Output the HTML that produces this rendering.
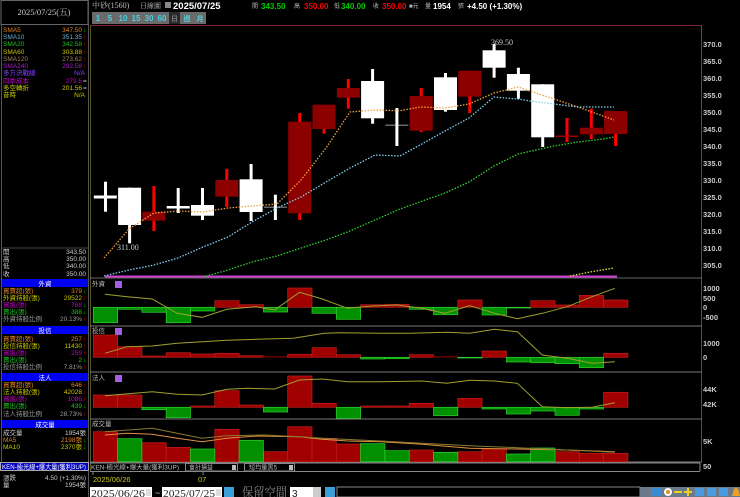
<!DOCTYPE html>
<html><head><meta charset="utf-8"><style>
html,body{margin:0;padding:0;background:#000;width:740px;height:497px;overflow:hidden}
svg{display:block}
text{font-family:"Liberation Sans","Noto Sans CJK TC",sans-serif}
.s{font-family:"Liberation Serif","Noto Serif CJK SC",serif;font-size:6.5px}
</style></head><body>
<svg width="740" height="497" viewBox="0 0 740 497" xmlns="http://www.w3.org/2000/svg">
<rect width="740" height="497" fill="#000"/>
<rect x="1" y="0.5" width="87" height="24" fill="none" stroke="#666"/>
<line x1="88.5" y1="0" x2="88.5" y2="497" stroke="#555"/>
<line x1="1.5" y1="25" x2="1.5" y2="462" stroke="#555"/>
<text x="44" y="15" class="s" fill="#ccc" text-anchor="middle" style="font-size:8.5px">2025/07/25(五)</text>
<g class="s">
<text x="3" y="32" fill="#e08020">SMA5</text><text x="82" y="32" fill="#e08020" text-anchor="end">347.50</text><text x="83" y="32" fill="#0c0">↓</text>
<text x="3" y="39" fill="#60b0d8">SMA10</text><text x="82" y="39" fill="#60b0d8" text-anchor="end">351.35</text><text x="83" y="39" fill="#f00">↑</text>
<text x="3" y="46" fill="#20c020">SMA20</text><text x="82" y="46" fill="#20c020" text-anchor="end">342.58</text><text x="83" y="46" fill="#f00">↑</text>
<text x="3" y="54" fill="#c8c800">SMA60</text><text x="82" y="54" fill="#c8c800" text-anchor="end">303.88</text><text x="83" y="54" fill="#f00">↑</text>
<text x="3" y="61" fill="#a08060">SMA120</text><text x="82" y="61" fill="#a08060" text-anchor="end">273.62</text><text x="83" y="61" fill="#f00">↑</text>
<text x="3" y="68" fill="#a020c0">SMA240</text><text x="82" y="68" fill="#a020c0" text-anchor="end">292.58</text><text x="83" y="68" fill="#f00">↑</text>
<text x="3" y="75" fill="#8040ff">多方決戰線</text><text x="85" y="75" fill="#8040ff" text-anchor="end">N/A</text>
<text x="3" y="83" fill="#c000c0">四季成本</text><text x="82" y="83" fill="#c000c0" text-anchor="end">279.5</text><text x="83" y="83" fill="#ccc">=</text>
<text x="3" y="90" fill="#c8c800">多空轉折</text><text x="82" y="90" fill="#c8c800" text-anchor="end">201.56</text><text x="83" y="90" fill="#ccc">=</text>
<text x="3" y="97" fill="#c8c800">昔時</text><text x="85" y="97" fill="#c8c800" text-anchor="end">N/A</text>
<line x1="1" y1="248" x2="88" y2="248" stroke="#444"/>
<text x="3" y="254" fill="#ccc">開</text><text x="86" y="254" fill="#ccc" text-anchor="end">343.50</text>
<text x="3" y="261" fill="#ccc">高</text><text x="86" y="261" fill="#ccc" text-anchor="end">350.00</text>
<text x="3" y="268" fill="#ccc">低</text><text x="86" y="268" fill="#ccc" text-anchor="end">340.00</text>
<text x="3" y="276" fill="#ccc">收</text><text x="86" y="276" fill="#ccc" text-anchor="end">350.00</text>
</g>
<g class="s">
<rect x="2" y="279" width="86" height="8" fill="#0000f0"/><text x="45" y="286" fill="#fff" text-anchor="middle">外資</text>
<text x="3" y="293" fill="#e08020">買賣超(張)</text><text x="82" y="293" fill="#e08020" text-anchor="end">379</text><text x="83" y="293" fill="#0c0">↓</text>
<text x="3" y="300" fill="#c8c800">外資持股(張)</text><text x="82" y="300" fill="#c8c800" text-anchor="end">29522</text><text x="83" y="300" fill="#f00">↑</text>
<text x="3" y="307" fill="#c000c0">買進(張)</text><text x="82" y="307" fill="#c000c0" text-anchor="end">768</text><text x="83" y="307" fill="#0c0">↓</text>
<text x="3" y="314" fill="#20c020">賣出(張)</text><text x="82" y="314" fill="#20c020" text-anchor="end">388</text><text x="83" y="314" fill="#0c0">↓</text>
<text x="3" y="321" fill="#999">外資持股比例</text><text x="82" y="321" fill="#999" text-anchor="end">20.13%</text><text x="83" y="321" fill="#f00">↑</text>
<rect x="2" y="326" width="86" height="8" fill="#0000f0"/><text x="45" y="333" fill="#fff" text-anchor="middle">投信</text>
<text x="3" y="341" fill="#e08020">買賣超(張)</text><text x="82" y="341" fill="#e08020" text-anchor="end">257</text><text x="83" y="341" fill="#f00">↑</text>
<text x="3" y="348" fill="#c8c800">投信持股(張)</text><text x="82" y="348" fill="#c8c800" text-anchor="end">11430</text><text x="83" y="348" fill="#f00">↑</text>
<text x="3" y="355" fill="#c000c0">買進(張)</text><text x="82" y="355" fill="#c000c0" text-anchor="end">259</text><text x="83" y="355" fill="#f00">↑</text>
<text x="3" y="362" fill="#20c020">賣出(張)</text><text x="82" y="362" fill="#20c020" text-anchor="end">2</text><text x="83" y="362" fill="#0c0">↓</text>
<text x="3" y="369" fill="#999">投信持股比例</text><text x="82" y="369" fill="#999" text-anchor="end">7.81%</text><text x="83" y="369" fill="#f00">↑</text>
<rect x="2" y="373" width="86" height="8" fill="#0000f0"/><text x="45" y="380" fill="#fff" text-anchor="middle">法人</text>
<text x="3" y="387" fill="#e08020">買賣超(張)</text><text x="82" y="387" fill="#e08020" text-anchor="end">646</text><text x="83" y="387" fill="#f00">↑</text>
<text x="3" y="394" fill="#c8c800">法人持股(張)</text><text x="82" y="394" fill="#c8c800" text-anchor="end">42028</text><text x="83" y="394" fill="#f00">↑</text>
<text x="3" y="401" fill="#c000c0">買進(張)</text><text x="82" y="401" fill="#c000c0" text-anchor="end">1086</text><text x="83" y="401" fill="#f00">↑</text>
<text x="3" y="408" fill="#20c020">賣出(張)</text><text x="82" y="408" fill="#20c020" text-anchor="end">439</text><text x="83" y="408" fill="#0c0">↓</text>
<text x="3" y="416" fill="#999">法人持股比例</text><text x="82" y="416" fill="#999" text-anchor="end">28.73%</text><text x="83" y="416" fill="#f00">↑</text>
<rect x="2" y="420" width="86" height="8" fill="#0000f0"/><text x="45" y="427" fill="#fff" text-anchor="middle">成交量</text>
<text x="3" y="435" fill="#ccc">成交量</text><text x="86" y="435" fill="#ccc" text-anchor="end">1954張</text>
<text x="3" y="442" fill="#e08020">MA5</text><text x="82" y="442" fill="#e08020" text-anchor="end">2198張</text><text x="83" y="442" fill="#0c0">↓</text>
<text x="3" y="449" fill="#c8c800">MA10</text><text x="82" y="449" fill="#c8c800" text-anchor="end">2370張</text><text x="83" y="449" fill="#0c0">↓</text>
<rect x="0.5" y="462.5" width="88" height="8" fill="#0000c0" stroke="#aaa"/><text x="2" y="469" fill="#fff" textLength="84" lengthAdjust="spacingAndGlyphs">KEN-極光線+爆大量(獲利3UP)</text>
<text x="3" y="480" fill="#ccc">漲跌</text><text x="86" y="480" fill="#ccc" text-anchor="end">4.50 (+1.30%)</text>
<text x="3" y="487" fill="#ccc">量</text><text x="86" y="487" fill="#ccc" text-anchor="end">1954張</text>
</g>
<g style="font-size:8px">
<text x="92" y="8" class="s" fill="#bbb" style="font-size:8px">中砂(1560)</text>
<text x="140" y="8" class="s" fill="#bbb" style="font-size:7px">日線圖</text>
<rect x="165" y="2" width="6" height="6" fill="#888"/>
<text x="173" y="9" fill="#fff" font-weight="bold" style="font-size:9.5px">2025/07/25</text>
<text x="252" y="8" fill="#bbb" style="font-size:6px">開</text>
<text x="261" y="9" fill="#0c0" font-weight="bold">343.50</text>
<text x="294" y="8" fill="#bbb" style="font-size:6px">高</text>
<text x="304" y="9" fill="#f00" font-weight="bold">350.00</text>
<text x="334" y="8" fill="#bbb" style="font-size:6px">低</text>
<text x="341" y="9" fill="#0c0" font-weight="bold">340.00</text>
<text x="373" y="8" fill="#bbb" style="font-size:6px">收</text>
<text x="382" y="9" fill="#f00" font-weight="bold">350.00</text>
<text x="409" y="8" fill="#bbb" style="font-size:6px">■元</text>
<text x="425" y="8" fill="#bbb" style="font-size:6px">量</text>
<text x="433" y="9" fill="#fff" font-weight="bold">1954</text>
<text x="458" y="8" fill="#bbb" style="font-size:6px">張</text>
<text x="467" y="9" fill="#fff" font-weight="bold">+4.50 (+1.30%)</text>
</g>
<g style="font-size:8px" font-weight="bold">
<rect x="92" y="12" width="114" height="12" fill="#6a6a6a"/>
<rect x="169" y="12" width="11" height="12" fill="#2a2a2a"/>
<g fill="#4ad0e0" text-anchor="middle">
<text x="98" y="21">1</text><text x="110" y="21">5</text><text x="123" y="21">10</text><text x="136" y="21">15</text><text x="149" y="21">30</text><text x="162" y="21">60</text>
</g>
<g class="s" text-anchor="middle" style="font-size:7px"><text x="174.5" y="21" fill="#777">日</text><text x="187" y="21" fill="#4ad0e0">週</text><text x="200" y="21" fill="#4ad0e0">月</text></g>
</g>
<line x1="90" y1="25.5" x2="702" y2="25.5" stroke="#7a2040"/>
<line x1="90.5" y1="25" x2="90.5" y2="472" stroke="#552"/>
<line x1="701.5" y1="25" x2="701.5" y2="462" stroke="#552"/>
<line x1="90" y1="278" x2="702" y2="278" stroke="#666"/>
<line x1="90" y1="326" x2="702" y2="326" stroke="#777"/>
<line x1="90" y1="372" x2="702" y2="372" stroke="#777"/>
<line x1="90" y1="419" x2="702" y2="419" stroke="#777"/>
<line x1="90" y1="462" x2="702" y2="462" stroke="#777"/>
<g fill="#ccc" style="font-size:7.5px" font-weight="bold">
<text x="703" y="47">370.0</text><text x="703" y="64">365.0</text><text x="703" y="81">360.0</text><text x="703" y="98">355.0</text><text x="703" y="115">350.0</text><text x="703" y="132">345.0</text><text x="703" y="149">340.0</text><text x="703" y="166">335.0</text><text x="703" y="183">330.0</text><text x="703" y="200">325.0</text><text x="703" y="217">320.0</text><text x="703" y="234">315.0</text><text x="703" y="251">310.0</text><text x="703" y="268">305.0</text>
<text x="703" y="291">1000</text><text x="703" y="301">500</text><text x="703" y="310">0</text><text x="703" y="320">-500</text>
<text x="703" y="346">1000</text><text x="703" y="360">0</text>
<text x="703" y="392">44K</text><text x="703" y="407">42K</text>
<text x="703" y="444">5K</text><text x="703" y="469">50</text>
</g>
<line x1="105" y1="276.5" x2="617" y2="276.5" stroke="#d040d0" stroke-width="2"/>
<g>
<rect x="104" y="181.7" width="3" height="30" fill="#fff"/><rect x="93.8" y="195.5" width="23" height="3" fill="#fff"/>
<rect x="128.1" y="187.7" width="3" height="55.6" fill="#fff"/><rect x="118.1" y="187.7" width="23" height="37.3" fill="#fff"/>
<rect x="152.4" y="186" width="3" height="45" fill="#f00"/><rect x="142.4" y="211.7" width="23" height="9" fill="#8c0000"/>
<rect x="176.7" y="188" width="3" height="25" fill="#fff"/><rect x="166.7" y="206" width="23" height="2.5" fill="#fff"/>
<rect x="201" y="188" width="3" height="32" fill="#fff"/><rect x="191" y="205" width="23" height="10.7" fill="#fff"/>
<rect x="225.3" y="169" width="3" height="38" fill="#f00"/><rect x="215.3" y="180" width="23" height="16.7" fill="#8c0000"/>
<rect x="249.6" y="164" width="3" height="57" fill="#fff"/><rect x="239.6" y="179.3" width="23" height="32.7" fill="#fff"/>
<rect x="263.9" y="206.5" width="23" height="1.5" fill="#666"/><rect x="273.9" y="194.7" width="3" height="25.3" fill="#fff"/>
<rect x="298.2" y="113" width="3" height="107" fill="#f00"/><rect x="288.2" y="121.7" width="23" height="91.6" fill="#8c0000"/>
<rect x="322.5" y="104.7" width="3" height="29" fill="#f00"/><rect x="312.5" y="104.7" width="23" height="24.3" fill="#8c0000"/>
<rect x="346.8" y="79" width="3" height="29.7" fill="#f00"/><rect x="336.8" y="88" width="23" height="9.7" fill="#8c0000"/>
<rect x="371.1" y="69" width="3" height="54.7" fill="#fff"/><rect x="361.1" y="81" width="23" height="37.3" fill="#fff"/>
<rect x="385.4" y="124.5" width="23" height="1.5" fill="#666"/><rect x="395.4" y="108" width="3" height="38" fill="#fff"/>
<rect x="419.7" y="88" width="3" height="44" fill="#f00"/><rect x="409.7" y="96" width="23" height="34.7" fill="#8c0000"/>
<rect x="444" y="73" width="3" height="38.7" fill="#fff"/><rect x="434" y="77.3" width="23" height="32.7" fill="#fff"/>
<rect x="468.3" y="70.7" width="3" height="42.3" fill="#f00"/><rect x="458.3" y="70.7" width="23" height="26" fill="#8c0000"/>
<rect x="492.6" y="44" width="3" height="33.7" fill="#fff"/><rect x="482.6" y="50.3" width="23" height="17.4" fill="#fff"/>
<rect x="516.9" y="67.7" width="3" height="31" fill="#fff"/><rect x="506.9" y="74" width="23" height="16.7" fill="#fff"/>
<rect x="541.2" y="84.3" width="3" height="62.7" fill="#fff"/><rect x="531.2" y="84.3" width="23" height="53" fill="#fff"/>
<rect x="565.5" y="118" width="3" height="24" fill="#f00"/><rect x="555.5" y="135.5" width="23" height="1.5" fill="#a00000"/>
<rect x="589.8" y="108.7" width="3" height="30.3" fill="#f00"/><rect x="579.8" y="127.7" width="23" height="6.6" fill="#8c0000"/>
<rect x="614.1" y="111" width="3" height="35" fill="#f00"/><rect x="604.1" y="111" width="23" height="23" fill="#8c0000"/>
</g>
<text x="491" y="45" fill="#ccc" class="s" style="font-size:8px">369.50</text>
<text x="117" y="250" fill="#ccc" class="s" style="font-size:8px">311.00</text>
<g fill="none" stroke-width="1.3" stroke-dasharray="1.5,1.5">
<polyline stroke="#f0a040" points="104,258 129,229 154,213 178,211 203,212 228,208 252,206 277,204 301,180 326,148 350,112 375,110 400,110.7 420,107 445,108 469,104 494,93 518,87 530,91 554,99 578,107 603,116 614,120"/>
<polyline stroke="#80d0f0" points="104,276 129,270 154,265 178,258 203,247 228,237 252,222 277,208 301,197 326,182 350,168 375,155 400,156 420,145 445,131 469,118 494,97 518,99 530,101 554,104 578,107 603,107 614,107"/>
<polyline stroke="#30d030" points="203,277 228,270 252,262 277,256 301,248 326,240 350,231 375,220 400,209 445,193 469,182 494,166 518,154 554,146 578,142 603,139 614,137"/>
<polyline stroke="#e0e030" points="570,276 590,272 614,268"/>
</g>
<rect x="115" y="281" width="7" height="7" fill="#a060e0"/><rect x="115" y="328" width="7" height="7" fill="#a060e0"/><rect x="115" y="375" width="7" height="7" fill="#a060e0"/>
<g class="s" fill="#bbb"><text x="92" y="286">外資</text><text x="92" y="333">投信</text><text x="92" y="380">法人</text><text x="92" y="426">成交量</text></g>
<g stroke-width="0.7">
<g fill="#009000" stroke="#30d030">
<rect x="93.3" y="307.3" width="24.3" height="15.4"/><rect x="117.6" y="307.3" width="24.3" height="2"/><rect x="141.9" y="307.3" width="24.3" height="5"/><rect x="166.2" y="307.3" width="24.3" height="15.4"/><rect x="190.5" y="307.3" width="24.3" height="3.7"/><rect x="263.4" y="307.3" width="24.3" height="4.7"/><rect x="312" y="307.3" width="24.3" height="6"/><rect x="336.3" y="307.3" width="24.3" height="12"/><rect x="409.2" y="307.3" width="24.3" height="2"/><rect x="433.5" y="307.3" width="24.3" height="7.4"/><rect x="482.1" y="307.3" width="24.3" height="7.7"/><rect x="506.4" y="307.3" width="24.3" height="0.7"/>
</g>
<g fill="#a00000" stroke="#c02020">
<rect x="214.8" y="300.7" width="24.3" height="6.6"/><rect x="239.1" y="304.7" width="24.3" height="2.6"/><rect x="287.7" y="288" width="24.3" height="19.3"/><rect x="360.6" y="304.7" width="24.3" height="2.6"/><rect x="384.9" y="304.3" width="24.3" height="3"/><rect x="457.8" y="300" width="24.3" height="7.3"/><rect x="530.7" y="300.7" width="24.3" height="6.6"/><rect x="555" y="305" width="24.3" height="2.3"/><rect x="579.3" y="295.3" width="24.3" height="12"/><rect x="603.6" y="300" width="24.3" height="7.3"/>
</g>
</g>
<polyline fill="none" stroke="#a0a030" stroke-width="1" points="104.9,294.3 127.3,296.7 152.2,299 177.1,313.3 202,317.3 226.9,309.3 256,306.7 274.6,310 299.5,292.3 322.4,299 347.3,308.3 372.2,306 397,305 422,308.3 444.8,313.3 469.7,305.7 494.6,313.3 517.4,318.7 542.3,313.3 567.2,306.7 592.1,296.7 614.9,288.3"/>
<g stroke-width="0.7">
<g fill="#a00000" stroke="#c02020">
<rect x="93.3" y="335" width="24.3" height="22.3"/><rect x="117.6" y="346.7" width="24.3" height="10.6"/><rect x="141.9" y="356" width="24.3" height="1.3"/><rect x="166.2" y="352.7" width="24.3" height="4.6"/><rect x="190.5" y="354" width="24.3" height="3.3"/><rect x="214.8" y="353.3" width="24.3" height="4"/><rect x="239.1" y="355.7" width="24.3" height="1.6"/><rect x="263.4" y="356.3" width="24.3" height="1" fill="#600000" stroke="#600000"/><rect x="287.7" y="354.3" width="24.3" height="3"/><rect x="312" y="347.7" width="24.3" height="9.6"/><rect x="336.3" y="354.7" width="24.3" height="2.6"/><rect x="409.2" y="354.7" width="24.3" height="2.6"/><rect x="433.5" y="356.3" width="24.3" height="1" fill="#600000" stroke="#600000"/><rect x="482.1" y="351" width="24.3" height="6.3"/><rect x="603.6" y="353.3" width="24.3" height="4"/>
</g>
<g fill="#009000" stroke="#30d030">
<rect x="360.6" y="357.3" width="24.3" height="1.7"/><rect x="384.9" y="357.3" width="24.3" height="1.4"/><rect x="457.8" y="357.3" width="24.3" height="0.7"/><rect x="506.4" y="357.3" width="24.3" height="4.7"/><rect x="530.7" y="357.3" width="24.3" height="5.4"/><rect x="555" y="357.3" width="24.3" height="6.4"/><rect x="579.3" y="357.3" width="24.3" height="10.4"/>
</g>
</g>
<polyline fill="none" stroke="#a0a030" stroke-width="1" points="104.9,353.3 127.3,346.7 152.2,346 177.1,343.3 202,341.7 226.9,340.3 256,339.3 293.3,338.3 324.4,333.3 339,332.7 380.5,333.3 409.5,333.3 446.8,332.3 469.7,333.3 494.6,329.3 517.4,331.7 542.3,355 567.2,358.3 592.1,363.3 614.9,361.7"/>
<g stroke-width="0.7">
<g fill="#a00000" stroke="#c02020">
<rect x="93.3" y="395" width="24.3" height="12.3"/><rect x="117.6" y="395" width="24.3" height="12.3"/><rect x="190.5" y="406" width="24.3" height="1.3"/><rect x="214.8" y="390.7" width="24.3" height="16.6"/><rect x="239.1" y="405" width="24.3" height="2.3"/><rect x="287.7" y="376" width="24.3" height="31.3"/><rect x="312" y="403.3" width="24.3" height="4"/><rect x="360.6" y="406" width="24.3" height="1.3"/><rect x="384.9" y="406" width="24.3" height="1.3"/><rect x="409.2" y="403.3" width="24.3" height="4"/><rect x="457.8" y="398.3" width="24.3" height="9"/><rect x="603.6" y="392.3" width="24.3" height="15"/>
</g>
<g fill="#009000" stroke="#30d030">
<rect x="141.9" y="407.3" width="24.3" height="2.4"/><rect x="166.2" y="407.3" width="24.3" height="10.4"/><rect x="263.4" y="407.3" width="24.3" height="4.7"/><rect x="336.3" y="407.3" width="24.3" height="11"/><rect x="433.5" y="407.3" width="24.3" height="8.4"/><rect x="482.1" y="407.3" width="24.3" height="1.7"/><rect x="506.4" y="407.3" width="24.3" height="6.7"/><rect x="530.7" y="407.3" width="24.3" height="3.7"/><rect x="555" y="407.3" width="24.3" height="8"/><rect x="579.3" y="407.3" width="24.3" height="1.7"/>
</g>
</g>
<polyline fill="none" stroke="#a0a030" stroke-width="1" points="104.9,395.7 152.2,391.7 177.1,394.3 202,395 226.9,389.3 247.7,388.3 274.6,389 299.5,380 322.4,379 347.3,381.7 380.5,381.7 422,381 446.8,383.3 469.7,380.3 494.6,381 517.4,383.3 542.3,406.7 567.2,407.7 592.1,407.3 614.9,402.7"/>
<g stroke-width="0.7">
<g fill="#a00000" stroke="#c02020">
<rect x="93.3" y="431.7" width="24.3" height="30"/><rect x="141.9" y="442.7" width="24.3" height="19"/><rect x="166.2" y="447.3" width="24.3" height="14.4"/><rect x="214.8" y="429.3" width="24.3" height="32.4"/><rect x="263.4" y="451.7" width="24.3" height="10"/><rect x="287.7" y="426.7" width="24.3" height="35"/><rect x="312" y="438.3" width="24.3" height="23.4"/><rect x="336.3" y="444" width="24.3" height="17.7"/><rect x="409.2" y="450" width="24.3" height="11.7"/><rect x="457.8" y="451.7" width="24.3" height="10"/><rect x="482.1" y="449" width="24.3" height="12.7"/><rect x="555" y="451.7" width="24.3" height="10"/><rect x="579.3" y="453.3" width="24.3" height="8.4"/><rect x="603.6" y="453.3" width="24.3" height="8.4"/>
</g>
<g fill="#009000" stroke="#30d030">
<rect x="117.6" y="438.7" width="24.3" height="23"/><rect x="190.5" y="449" width="24.3" height="12.7"/><rect x="239.1" y="440.3" width="24.3" height="21.4"/><rect x="360.6" y="443.7" width="24.3" height="18"/><rect x="384.9" y="450.7" width="24.3" height="11"/><rect x="433.5" y="452.3" width="24.3" height="9.4"/><rect x="506.4" y="454" width="24.3" height="7.7"/><rect x="530.7" y="448" width="24.3" height="13.7"/>
</g>
</g>
<polyline fill="none" stroke="#e09040" stroke-width="1" points="104.9,435 127.3,433.3 152.2,434.3 177.1,438.3 202,441.7 226.9,438.3 256,436 299.5,436.7 322.4,439.3 347.3,441 380.5,441.7 422,444.3 469.7,448.3 517.4,449 567.2,450 614.9,451.7"/>
<polyline fill="none" stroke="#8a7a30" stroke-width="1" points="104.9,431.7 152.2,428.3 177.1,433.3 202,438.3 226.9,435.7 264.3,435 299.5,436.7 322.4,438.3 380.5,441 422,443.3 469.7,445.7 517.4,447.7 567.2,450 614.9,452.3"/>
<line x1="90" y1="463" x2="700" y2="463" stroke="#888"/>
<line x1="700" y1="463" x2="700" y2="471" stroke="#888"/>
<line x1="90" y1="471.5" x2="700" y2="471.5" stroke="#888"/>
<g class="s" style="font-size:6px" fill="#bbb">
<text x="91" y="469.5" textLength="88" lengthAdjust="spacingAndGlyphs">KEN-極光線+爆大量(獲利3UP)</text>
<rect x="185.5" y="463.5" width="52" height="7.5" fill="none" stroke="#888"/><text x="189" y="469.5" textLength="24" lengthAdjust="spacingAndGlyphs">會計損益</text><rect x="232" y="465" width="4" height="5" fill="#bbb"/>
<rect x="244.5" y="463.5" width="50" height="7.5" fill="none" stroke="#888"/><text x="249" y="469.5" textLength="28" lengthAdjust="spacingAndGlyphs">短均量黑5</text><rect x="289" y="465" width="4" height="5" fill="#bbb"/>
</g>
<line x1="93" y1="472" x2="93" y2="475" stroke="#888"/><line x1="203" y1="472" x2="203" y2="475" stroke="#888"/>
<text x="93" y="482" fill="#c8c820" style="font-size:7.5px">2025/06/26</text>
<text x="198" y="482" fill="#c8c820" style="font-size:7.5px">07</text>
<rect x="90" y="487" width="62" height="10" fill="#fff"/><text x="91" y="497" fill="#222" class="s" style="font-size:11px" textLength="54" lengthAdjust="spacingAndGlyphs">2025/06/26</text><rect x="146" y="489" width="5" height="7" fill="#ddd"/>
<text x="155" y="496" fill="#ccc" style="font-size:9px">~</text>
<rect x="162" y="487" width="60" height="10" fill="#fff"/><text x="163" y="497" fill="#222" class="s" style="font-size:11px" textLength="52" lengthAdjust="spacingAndGlyphs">2025/07/25</text><rect x="216" y="489" width="5" height="7" fill="#ddd"/>
<rect x="224" y="487" width="10" height="10" fill="#3aa0d8"/>
<text x="242" y="497" fill="#888" class="s" style="font-size:13px" textLength="45" lengthAdjust="spacingAndGlyphs">保留空間</text>
<rect x="290" y="487" width="23" height="10" fill="#fff"/><text x="292" y="497" fill="#222" style="font-size:10px">3</text>
<rect x="313" y="487" width="8" height="10" fill="#ccc"/>
<rect x="325" y="487" width="10" height="10" fill="#3aa0d8"/>
<rect x="337" y="487" width="303" height="10" fill="#000" stroke="#888"/>
<rect x="640" y="487" width="100" height="10" fill="#6a7a8a"/>
<g>
<rect x="651" y="488" width="10" height="8" fill="#3a8ad0"/>
<circle cx="668" cy="492" r="4" fill="#fff"/><circle cx="668" cy="492" r="2" fill="#e09020"/>
<rect x="674" y="491" width="8" height="2" fill="#f0d020"/>
<rect x="684" y="491" width="8" height="2" fill="#f0d020"/><rect x="687" y="488" width="2" height="8" fill="#f0d020"/>
<rect x="695" y="488" width="9" height="8" fill="#4a9ae0"/>
<rect x="707" y="488" width="9" height="8" fill="#4a9ae0"/>
<rect x="719" y="488" width="9" height="8" fill="#4a9ae0"/>
<path d="M732 496 L734 489 L736 487 L738 489 L740 496 Z" fill="#f0a020"/>
</g>
</svg>
</body></html>
